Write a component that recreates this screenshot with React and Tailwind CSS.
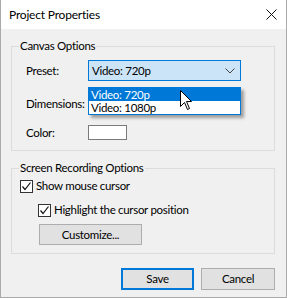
import React from 'react';

const font = { fontFamily: 'Lato, "Segoe UI", sans-serif' };

function Checkbox() {
  return (
    <span className="flex h-[13px] w-[13px] shrink-0 items-center justify-center border border-[#333] bg-white">
      <svg width="11" height="11" viewBox="0 0 11 11">
        <polyline points="1.5,5.5 4,8.5 9.5,1.5" fill="none" stroke="#111" strokeWidth="1.2" />
      </svg>
    </span>
  );
}

function Spin({ className = "" }) {
  return (
    <div className={"flex h-[21px] w-[61px] border border-[#7a7a7a] bg-white " + className}>
      <div className="flex-1" />
      <div className="w-[16px] border-l border-[#adadad] bg-[#e1e1e1]" />
    </div>
  );
}

export default function App() {
  return (
    <div className="flex h-[298px] w-[287px] flex-col border-x border-b border-[#aaaaaa] bg-[#f0f0f0] text-[11.5px] leading-[14px] tracking-[-0.3px] text-black" style={font}>
      {/* title bar */}
      <div className="flex h-[29px] shrink-0 items-center justify-between bg-white pl-[8px] pr-[9px]">
        <span className="text-[12px] tracking-[-0.2px]">Project Properties</span>
        <svg width="11" height="11" viewBox="0 0 11 11">
          <path d="M0.5 0.5 L10.5 10.5 M10.5 0.5 L0.5 10.5" stroke="#111" strokeWidth="1" />
        </svg>
      </div>

      <div className="flex flex-col pl-[10px] pr-[11px] pt-[10px]">
        {/* canvas options */}
        <fieldset className="relative border border-[#dcdcdc] pb-[10px]">
          <legend className="ml-[7px] px-[1px]">Canvas Options</legend>
          <div className="flex flex-col pl-[14px] pt-[7px]">
            <div className="flex items-center">
              <span className="w-[62px]">Preset:</span>
              <div className="flex h-[21px] w-[153px] items-center justify-between border border-[#0078d7] bg-[#cce4f7] pl-[3px] pr-[5px]">
                <span>Video: 720p</span>
                <svg width="10" height="6" viewBox="0 0 10 6">
                  <polyline points="0.5,0.5 5,5 9.5,0.5" fill="none" stroke="#444" strokeWidth="1" />
                </svg>
              </div>
            </div>
            <div className="mt-[12px] flex items-center">
              <span className="w-[62px]">Dimensions:</span>
              <Spin />
              <Spin className="ml-[31px]" />
            </div>
            <div className="mt-[11px] flex items-center">
              <span className="w-[62px]">Color:</span>
              <div className="h-[15px] w-[39px] border border-[#7a7a7a] bg-white" />
            </div>
          </div>

          {/* open dropdown list */}
          <div className="absolute left-[76px] top-[34px] w-[153px] border border-[#0078d7] bg-white shadow-[3px_3px_3px_rgba(0,0,0,0.35)]">
            <div className="h-[13px] bg-[#0078d7] pl-[2px] text-white leading-[13px]">Video: 720p</div>
            <div className="h-[13px] pl-[2px] leading-[13px]">Video: 1080p</div>
          </div>
          <svg className="absolute left-[168px] top-[37px]" width="13" height="21" viewBox="0 0 13 21">
            <path d="M0.5 0.5 L0.5 16.5 L4.5 12.5 L7.5 19.5 L9.5 18.5 L6.5 11.5 L11.5 11.5 Z" fill="#fff" stroke="#000" strokeWidth="1" />
          </svg>
        </fieldset>

        {/* screen recording options */}
        <fieldset className="mt-[10px] border border-[#dcdcdc] pb-[8px]">
          <legend className="ml-[7px] px-[1px]">Screen Recording Options</legend>
          <div className="flex flex-col pl-[8px] pt-[4px]">
            <div className="flex items-center gap-[3px]">
              <Checkbox />
              <span>Show mouse cursor</span>
            </div>
            <div className="ml-[18px] mt-[10px] flex items-center gap-[3px]">
              <Checkbox />
              <span>Highlight the cursor position</span>
            </div>
            <button className="ml-[19px] mt-[7px] h-[21px] w-[103px] border border-[#adadad] bg-[#e1e1e1]">Customize...</button>
          </div>
        </fieldset>

        <div className="mt-[14px] flex justify-end gap-[7px]">
          <button className="h-[22px] w-[73px] border-2 border-[#0078d7] bg-[#e1e1e1]">Save</button>
          <button className="h-[22px] w-[74px] border border-[#adadad] bg-[#e1e1e1]">Cancel</button>
        </div>
      </div>
    </div>
  );
}
